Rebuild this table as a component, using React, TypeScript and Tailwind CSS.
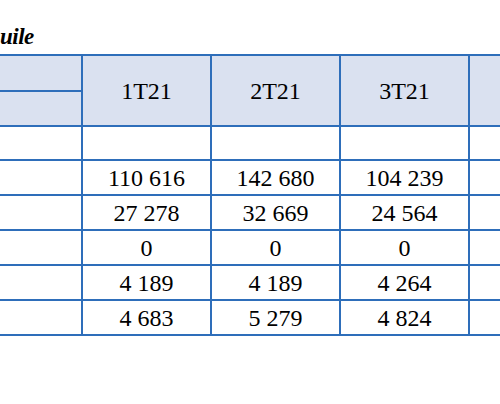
import React from 'react';

const cols = ['1T21', '2T21', '3T21', ''];

const rows: string[][] = [
  ['', '', '', ''],
  ['110 616', '142 680', '104 239', ''],
  ['27 278', '32 669', '24 564', ''],
  ['0', '0', '0', ''],
  ['4 189', '4 189', '4 264', ''],
  ['4 683', '5 279', '4 824', ''],
];

export default function App() {
  return (
    <div className="w-[500px] h-[404px] overflow-hidden bg-white [font-family:'Liberation_Serif',serif] text-black">
      {/* title, cut on the left */}
      <div className="h-[54px] pt-[25px] pl-0">
        <span className="text-[23px] leading-[23px] font-bold italic tracking-[-0.5px]">uile</span>
      </div>

      {/* table: gaps show as the blue rules */}
      <div className="ml-[-20px] w-[650px] grid grid-cols-[101px_127px_127px_127px_127px] grid-rows-[34px_33px_32px_33px_33px_33px_33px_33px] gap-[2px] bg-[#2e6eba] py-[2px] text-[24px] leading-none">
        <div className="bg-[#dae1f0]" />
        {cols.map((c, i) => (
          <div key={i} className="row-span-2 bg-[#dae1f0] flex items-center justify-center">
            {c}
          </div>
        ))}
        <div className="bg-[#dae1f0]" />

        {rows.map((r, i) => (
          <React.Fragment key={i}>
            <div className="bg-white" />
            {r.map((v, j) => (
              <div key={j} className="bg-white flex items-center justify-center">
                {v}
              </div>
            ))}
          </React.Fragment>
        ))}
      </div>
    </div>
  );
}
